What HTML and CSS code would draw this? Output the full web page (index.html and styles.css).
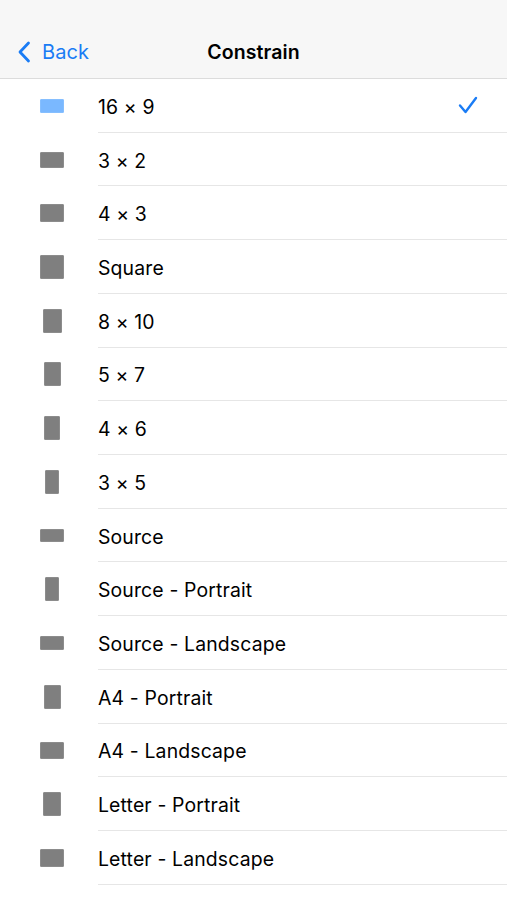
FILE: index.html
```html
<!DOCTYPE html>
<html>
<head>
<meta charset="utf-8">
<link rel="stylesheet" href="styles.css">
</head>
<body>
<header class="navbar">
  <div class="nav-left">
    <svg class="chevron" width="14" height="22" viewBox="0 0 14 22"><path d="M11.5 2 L3 11 L11.5 20" fill="none" stroke="#1a7cf5" stroke-width="2.8" stroke-linecap="round" stroke-linejoin="round"/></svg>
    <span class="back">Back</span>
  </div>
  <div class="title">Constrain</div>
  <div class="nav-right"></div>
</header>
<ul class="list">
  <li class="row"><span class="icon-cell"><span class="shape selected" style="width:24px;height:14px"></span></span><span class="label">16 × 9<svg class="check" width="20" height="18" viewBox="0 0 20 18"><path d="M2 9.5 L7.5 16 L18 2" fill="none" stroke="#1a7cf5" stroke-width="2.4" stroke-linecap="round" stroke-linejoin="round"/></svg></span></li>
  <li class="row"><span class="icon-cell"><span class="shape" style="width:24px;height:16px"></span></span><span class="label">3 × 2</span></li>
  <li class="row"><span class="icon-cell"><span class="shape" style="width:24px;height:18px"></span></span><span class="label">4 × 3</span></li>
  <li class="row"><span class="icon-cell"><span class="shape" style="width:24px;height:24px"></span></span><span class="label">Square</span></li>
  <li class="row"><span class="icon-cell"><span class="shape" style="width:19px;height:24px"></span></span><span class="label">8 × 10</span></li>
  <li class="row"><span class="icon-cell"><span class="shape" style="width:17px;height:24px"></span></span><span class="label">5 × 7</span></li>
  <li class="row"><span class="icon-cell"><span class="shape" style="width:16px;height:24px"></span></span><span class="label">4 × 6</span></li>
  <li class="row"><span class="icon-cell"><span class="shape" style="width:14.4px;height:24px"></span></span><span class="label">3 × 5</span></li>
  <li class="row"><span class="icon-cell"><span class="shape" style="width:24px;height:13.5px"></span></span><span class="label">Source</span></li>
  <li class="row"><span class="icon-cell"><span class="shape" style="width:13.5px;height:24px"></span></span><span class="label">Source - Portrait</span></li>
  <li class="row"><span class="icon-cell"><span class="shape" style="width:24px;height:13.5px"></span></span><span class="label">Source - Landscape</span></li>
  <li class="row"><span class="icon-cell"><span class="shape" style="width:17px;height:24px"></span></span><span class="label">A4 - Portrait</span></li>
  <li class="row"><span class="icon-cell"><span class="shape" style="width:24px;height:17px"></span></span><span class="label">A4 - Landscape</span></li>
  <li class="row"><span class="icon-cell"><span class="shape" style="width:18.5px;height:24px"></span></span><span class="label">Letter - Portrait</span></li>
  <li class="row"><span class="icon-cell"><span class="shape" style="width:24px;height:18.5px"></span></span><span class="label">Letter - Landscape</span></li>
</ul>
</body>
</html>
```
FILE: styles.css
```css
html, body {
  margin: 0;
  padding: 0;
  background: #ffffff;
  font-family: Inter, "Noto Sans", "Liberation Sans", sans-serif;
  color: #000;
}
.navbar {
  height: 64px;
  box-sizing: content-box;
  background: #f7f7f7;
  border-bottom: 1px solid #dcdcdc;
  display: grid;
  grid-template-columns: 1fr auto 1fr;
  align-items: end;
  padding-bottom: 14px;
}
.nav-left {
  display: flex;
  align-items: center;
  gap: 11px;
  padding-left: 17px;
  height: 24px;
}
.chevron { display: block; }
.back {
  color: #1a7cf5;
  font-size: 20px;
  letter-spacing: 0.1px;
}
.title {
  font-size: 19.5px;
  font-weight: 600;
  height: 24px;
  line-height: 24px;
  padding-top: 1px;
  letter-spacing: 0.1px;
}
.list {
  list-style: none;
  margin: 0;
  padding: 0;
}
.row {
  display: flex;
  height: 53.73px;
}
.icon-cell {
  width: 98px;
  flex: none;
  display: flex;
  align-items: center;
  justify-content: flex-start;
  padding-left: 40px;
  padding-right: 34px;
  box-sizing: border-box;
}
.icon-cell .shape {
  display: block;
  box-sizing: border-box;
  background: #7f7f7f;
  border: 1px solid #8c8c8c;
  border-radius: 1px;
  margin-left: auto;
  margin-right: auto;
}
.icon-cell .shape.selected {
  background: #7ab8ff;
  border-color: #86bfff;
}
.label {
  flex: 1;
  display: flex;
  align-items: center;
  border-bottom: 1px solid #e6e6e6;
  font-size: 19.4px;
  letter-spacing: 0.15px;
  padding-top: 3px;
  padding-right: 29px;
}
.check {
  margin-left: auto;
  margin-top: -3px;
  display: block;
}
```
